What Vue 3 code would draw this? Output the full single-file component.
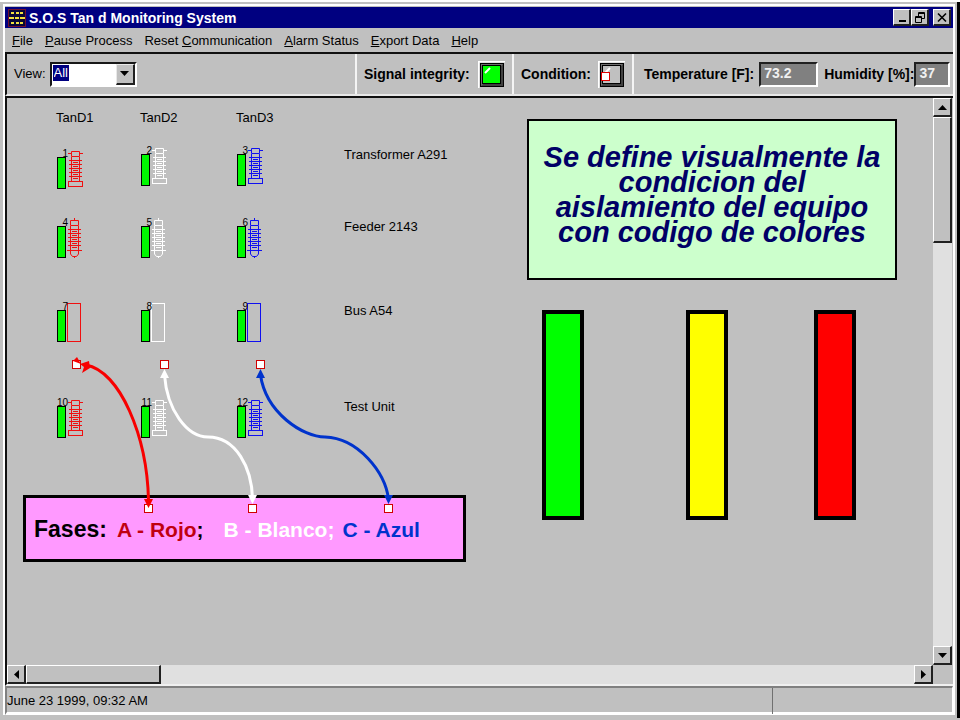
<script setup>
import { ref } from 'vue'

const view = ref('All')
const temperature = ref('73.2')
const humidity = ref('37')

const menus = [
  { pre: '', key: 'F', post: 'ile' },
  { pre: '', key: 'P', post: 'ause Process' },
  { pre: 'Reset ', key: 'C', post: 'ommunication' },
  { pre: '', key: 'A', post: 'larm Status' },
  { pre: '', key: 'E', post: 'xport Data' },
  { pre: '', key: 'H', post: 'elp' }
]

const columns = ['TanD1', 'TanD2', 'TanD3']
const phases = ['red', 'white', 'blue']
const rows = [
  { label: 'Transformer A291', kind: 'bushing', first: 1, drops: [3, 0, 0] },
  { label: 'Feeder 2143', kind: 'cable', first: 4, drops: [0, 0, 0] },
  { label: 'Bus A54', kind: 'bus', first: 7, drops: [0, 0, 0] },
  { label: 'Test Unit', kind: 'bushing', first: 10, drops: [0, 0, 0] }
]
const rings = [11.5, 15.5, 19.5, 23.5, 27.5]
const handles = [
  [76, 365], [164, 365], [260, 365],
  [148, 509], [252, 509], [388, 509]
]
</script>

<template>
  <div class="desktop">
    <div class="window">
      <div class="frame">
        <header class="titlebar">
          <svg class="app-icon" width="18" height="18" viewBox="0 0 18 18" aria-hidden="true">
            <rect x="0.5" y="0.5" width="17" height="17" fill="#080838" stroke="#701030" />
            <path d="M3 4h3M8 4h3M12 4h3M1 9h5M7 9h4M12 9h5M3 14h3M8 14h3M12 14h3" stroke="#f0e040" stroke-width="2" />
          </svg>
          <h1>S.O.S Tan d Monitoring System</h1>
          <div class="window-buttons">
            <button type="button" aria-label="Minimize">
              <svg width="14" height="13" viewBox="0 0 14 13"><path d="M4 10h7" stroke="#000" stroke-width="2" /></svg>
            </button>
            <button type="button" aria-label="Restore">
              <svg width="14" height="13" viewBox="0 0 14 13" fill="none" stroke="#000">
                <path d="M5.500 5V1.500h6v6h-2.500M5 2.500h7M2.500 5.500h6v6h-6zM2 6.500h7" />
              </svg>
            </button>
            <button type="button" class="close" aria-label="Close">
              <svg width="14" height="13" viewBox="0 0 14 13"><path d="M3 2.500l8 8M11 2.500l-8 8" stroke="#000" stroke-width="1.600" /></svg>
            </button>
          </div>
        </header>

        <nav class="menubar">
          <a v-for="m in menus" :key="m.key" href="#">{{ m.pre }}<u>{{ m.key }}</u>{{ m.post }}</a>
        </nav>

        <section class="toolbar">
          <div class="segment view">
            <label for="view">View:</label>
            <div class="combo">
              <select id="view" v-model="view">
                <option>All</option>
              </select>
              <span class="combo-arrow">
                <svg width="9" height="5" viewBox="0 0 9 5"><path d="M0 0h9L4.500 5z" /></svg>
              </span>
            </div>
          </div>
          <div class="segment signal">
            <span>Signal integrity:</span>
            <svg width="27" height="27" viewBox="0 0 27 27" role="img" aria-label="Signal good">
              <path d="M0 27V0h27" fill="none" stroke="#fff" stroke-width="3" />
              <rect x="2" y="2" width="24" height="24" fill="#000" />
              <rect x="3" y="3" width="22" height="22" fill="#707070" />
              <path d="M25 3v22H3l3-3h16V6z" fill="#404040" />
              <rect x="4.500" y="4.500" width="18" height="18" fill="#00ff00" stroke="#000" />
              <path d="M7 12l5-5" stroke="#fff" stroke-width="2" />
            </svg>
          </div>
          <div class="segment condition">
            <span>Condition:</span>
            <svg width="27" height="27" viewBox="0 0 27 27" role="img" aria-label="Condition">
              <path d="M0 27V0h27" fill="none" stroke="#fff" stroke-width="3" />
              <rect x="2" y="2" width="24" height="24" fill="#000" />
              <rect x="3" y="3" width="22" height="22" fill="#707070" />
              <path d="M25 3v22H3l3-3h16V6z" fill="#404040" />
              <rect x="4.500" y="4.500" width="18" height="18" fill="#c0c0c0" stroke="#000" />
              <path d="M7 12l5-5" stroke="#fff" stroke-width="2" />
              <rect x="3.500" y="11.500" width="8" height="8" fill="#fff" stroke="#e00000" />
            </svg>
          </div>
          <div class="segment climate">
            <label for="temp">Temperature [F]:</label>
            <input id="temp" v-model="temperature" class="temp" type="text" readonly>
            <label for="hum">Humidity [%]:</label>
            <input id="hum" v-model="humidity" class="hum" type="text" readonly>
          </div>
        </section>

        <main class="viewer">
          <div class="canvas">
            <div class="left">
              <div class="diagram">
                <span v-for="c in columns" :key="c">{{ c }}</span>
                <span></span>
                <template v-for="row in rows" :key="row.label">
                  <svg v-for="(phase, i) in phases" :key="phase" :class="['device', phase]" width="34" height="44" viewBox="0 0 34 44">
                    <g :transform="`translate(0 ${row.drops[i]})`">
                      <rect class="level" x="1.500" y="8.500" width="8" height="31" />
                      <g v-if="row.kind === 'bushing'" class="outline">
                        <path d="M12 4.500h3M24 4.500h3M15.500 2.500h8v5h-8zM15.500 8v24M23.500 8v24" />
                        <path v-for="y in rings" :key="y" :d="`M13 ${y}h13M17 ${y + 2}h5`" />
                        <rect x="12.500" y="32.500" width="14" height="5" />
                      </g>
                      <g v-else-if="row.kind === 'cable'" class="outline">
                        <path d="M18.500 0v2M14.500 2.500h8v5h-8zM14.500 8v24M22.500 8v24M11 32.500h15M14.500 33v3l2 2.500h4l2-2.500v-3M18.500 38v2" />
                        <path v-for="y in rings" :key="y" :d="`M12 ${y}h13M16 ${y + 2}h5`" />
                      </g>
                      <rect v-else class="outline" x="11.500" y="1.500" width="13" height="38" />
                      <text x="12" y="8" text-anchor="end">{{ row.first + i }}</text>
                    </g>
                  </svg>
                  <span class="row-label">{{ row.label }}</span>
                </template>
              </div>
              <div class="legend">
                <strong>Fases:</strong>
                <span><b class="rojo">A - Rojo</b>;</span>
                <b class="blanco">B - Blanco;</b>
                <b class="azul">C - Azul</b>
              </div>
            </div>

            <div class="right">
              <p class="callout">Se define visualmente la<br>condicion del<br>aislamiento del equipo<br>con codigo de colores</p>
              <div class="swatches">
                <div class="swatch ok"></div>
                <div class="swatch warning"></div>
                <div class="swatch alarm"></div>
              </div>
            </div>

            <svg class="links" width="440" height="430" viewBox="7 98 440 430" aria-hidden="true">
              <rect v-for="([x, y], i) in handles" :key="i" :x="x - 3.500" :y="y - 4.500" width="8" height="8" fill="#fff" stroke="#d00000" />
              <g fill="none" stroke-width="3">
                <path d="M86 365C120 371 147 436 148.500 500" stroke="#f80000" />
                <path d="M164.500 375C167 410 187 437 208 437C236 437 252 468 252.500 499" stroke="#fff" />
                <path d="M260.500 375C266 413 303 437 325 437C358 438 385 472 388.500 499" stroke="#0033cc" />
              </g>
              <path d="M80 364l9-3l1 7l-8 5l2-6zM73 361l4-4l4 7zM144 499h9l-4.500 9z" fill="#f80000" />
              <path d="M160 378l4.500-9l4.500 9zM248 495h9l-4.500 9z" fill="#fff" />
              <path d="M256 378l4.500-9l4.500 9zM384 495h9l-4.500 9z" fill="#0033cc" />
            </svg>
          </div>

          <div class="scrollbar vertical">
            <button type="button" aria-label="Scroll up"><svg width="9" height="5" viewBox="0 0 9 5"><path d="M0 5h9L4.500 0z" /></svg></button>
            <div class="thumb"></div>
            <div class="track"></div>
            <button type="button" aria-label="Scroll down"><svg width="9" height="5" viewBox="0 0 9 5"><path d="M0 0h9L4.500 5z" /></svg></button>
          </div>
          <div class="scrollbar horizontal">
            <button type="button" aria-label="Scroll left"><svg width="5" height="9" viewBox="0 0 5 9"><path d="M5 0v9L0 4.500z" /></svg></button>
            <div class="thumb"></div>
            <div class="track"></div>
            <button type="button" aria-label="Scroll right"><svg width="5" height="9" viewBox="0 0 5 9"><path d="M0 0v9L5 4.500z" /></svg></button>
          </div>
        </main>

        <footer class="statusbar">
          <span>June 23 1999, 09:32 AM</span>
          <span class="cell"></span>
        </footer>
      </div>
    </div>
  </div>
</template>

<style>
body {
  margin: 0;
  background: #c0c0c0;
}
</style>

<style scoped>
* {
  box-sizing: border-box;
}

.desktop {
  display: flex;
  min-height: 100vh;
  padding-bottom: 2px;
  border-top: 2px solid #fff;
  background: #c0c0c0;
  color: #000;
  font: 13px/16px "Liberation Sans", Arial, sans-serif;
}

.window {
  display: flex;
  flex: 1;
  padding: 2px 2px 3px 3px;
  border-right: 3px solid #000;
}

.frame {
  display: flex;
  flex: 1;
  flex-direction: column;
  padding-top: 1px;
  border: solid #fff;
  border-width: 2px 2px 0;
}

.titlebar {
  display: flex;
  align-items: center;
  height: 21px;
  padding: 0 2px 0 3px;
  background: #000080;
}

.titlebar h1 {
  flex: 1;
  margin: 0 0 0 3px;
  color: #fff;
  font-size: 14px;
  line-height: 20px;
}

.window-buttons {
  display: flex;
}

button {
  display: flex;
  align-items: center;
  justify-content: center;
  padding: 0;
  border: solid;
  border-width: 1px 2px 2px 1px;
  border-color: #fff #202020 #202020 #fff;
  border-radius: 0;
  background: #c0c0c0;
}

.window-buttons button {
  width: 18px;
  height: 17px;
}

.window-buttons .close {
  margin-left: 4px;
}

.menubar {
  display: flex;
  gap: 12px;
  height: 24px;
  padding: 5px 7px;
}

.menubar a {
  color: #000;
  text-decoration: none;
}

.toolbar {
  display: flex;
  height: 44px;
  border: solid #101010;
  border-width: 2px 0 0 2px;
  border-bottom: 2px solid #e8e8e8;
}

.segment {
  display: flex;
  align-items: center;
  font-size: 14px;
  font-weight: bold;
}

.segment + .segment {
  border-left: 2px solid #f4f4f4;
}

.view {
  flex: 1;
  gap: 4px;
  padding-left: 7px;
  font-size: 13px;
  font-weight: normal;
}

.combo {
  display: grid;
  grid-template-columns: 1fr 19px;
  width: 87px;
  height: 25px;
  border: 2px solid #181818;
  border-right-color: #fff;
  border-bottom-color: #fff;
  background: #fff;
}

.combo select {
  grid-area: 1 / 1 / 2 / 3;
  padding: 0 0 2px 2px;
  border: 0;
  border-radius: 0;
  appearance: none;
  background: linear-gradient(#000080, #000080) 1px 1px / 16px 16px no-repeat #fff;
  color: #fff;
  font: 13px/16px "Liberation Sans", Arial, sans-serif;
}

.combo-arrow {
  display: flex;
  grid-area: 1 / 2;
  align-items: center;
  justify-content: center;
  border: solid;
  border-width: 1px 2px 2px 1px;
  border-color: #e8e8e8 #202020 #202020 #e8e8e8;
  background: #c0c0c0;
  pointer-events: none;
}

.signal,
.condition {
  justify-content: space-between;
  width: 157px;
  padding: 0 7px;
}

.condition {
  width: 120px;
}

.climate {
  width: 321px;
  padding: 0 2px 0 10px;
}

.climate input {
  min-width: 0;
  height: 25px;
  margin: 0 6px 0 5px;
  padding: 0 3px 3px;
  border: 2px solid #202020;
  border-right-color: #fff;
  border-bottom-color: #fff;
  border-radius: 0;
  background: #808080;
  color: #f0f0f0;
  font: bold 14px/16px "Liberation Sans", Arial, sans-serif;
}

.climate .temp {
  width: 59px;
}

.climate .hum {
  width: 36px;
  margin: 0;
}

.climate label {
  white-space: nowrap;
}

.viewer {
  display: grid;
  flex: 1;
  grid-template-rows: 1fr 19px;
  grid-template-columns: 1fr 19px;
  border: 2px solid #101010;
  border-right: 0;
  border-bottom-color: #f0f0f0;
  padding-right: 1px;
}

.canvas {
  position: relative;
  display: grid;
  grid-template-columns: 520px 1fr;
}

.left {
  display: flex;
  flex-direction: column;
  align-items: flex-start;
  padding-top: 12px;
}

.diagram {
  display: grid;
  grid-template-rows: 36px 72px 84px 96px 97px;
  grid-template-columns: 84px 96px 108px auto;
  padding-left: 49px;
}

.device text {
  font: 10px "Liberation Sans", Arial, sans-serif;
}

.level {
  fill: #00f800;
  stroke: #000;
}

.outline {
  fill: none;
}

.red .outline {
  stroke: #f01010;
}

.white .outline {
  stroke: #fff;
}

.blue .outline {
  stroke: #1010f0;
}

.row-label {
  padding-top: 1px;
}

.legend {
  display: flex;
  align-items: baseline;
  width: 443px;
  height: 67px;
  margin-left: 16px;
  padding: 17px 8px;
  border: 3px solid #000;
  background: #ff99ff;
  font-size: 21px;
  font-weight: bold;
  line-height: 28px;
  white-space: nowrap;
}

.legend strong {
  margin-right: 10px;
  font-size: 23px;
}

.rojo {
  color: #c00010;
}

.blanco {
  margin: 0 8px 0 20px;
  color: #fff;
}

.azul {
  color: #0033cc;
}

.right {
  padding: 21px 36px 0 0;
}

.callout {
  height: 161px;
  margin: 0 0 30px;
  padding-top: 24px;
  border: 2px solid #000;
  background: #ccffcc;
  color: #000066;
  font-size: 29px;
  font-style: italic;
  font-weight: bold;
  line-height: 25px;
  text-align: center;
  white-space: nowrap;
}

.swatches {
  display: grid;
  grid-template-columns: 144px 128px 42px;
  padding-left: 15px;
}

.swatch {
  width: 42px;
  height: 210px;
  border: 4px solid #000;
}

.ok {
  background: #00ff00;
}

.warning {
  background: #ffff00;
}

.alarm {
  background: #ff0000;
}

.links {
  position: absolute;
  top: 0;
  left: 0;
  pointer-events: none;
}

.scrollbar {
  display: flex;
  background: #e0e0e0;
}

.vertical {
  flex-direction: column;
}

.scrollbar button {
  width: 19px;
  height: 19px;
}

.thumb {
  border: solid;
  border-width: 1px 2px 2px 1px;
  border-color: #fff #202020 #202020 #fff;
  background: #c0c0c0;
}

.vertical .thumb {
  height: 126px;
}

.horizontal .thumb {
  width: 135px;
}

.track {
  flex: 1;
}

.statusbar {
  display: grid;
  grid-template-columns: 1fr 180px;
  height: 29px;
  border: solid #808080;
  border-width: 2px 1px 3px 2px;
  border-right-color: #fff;
  border-bottom-color: #fff;
  line-height: 26px;
}

.cell {
  border-left: 1px solid #707070;
}
</style>
